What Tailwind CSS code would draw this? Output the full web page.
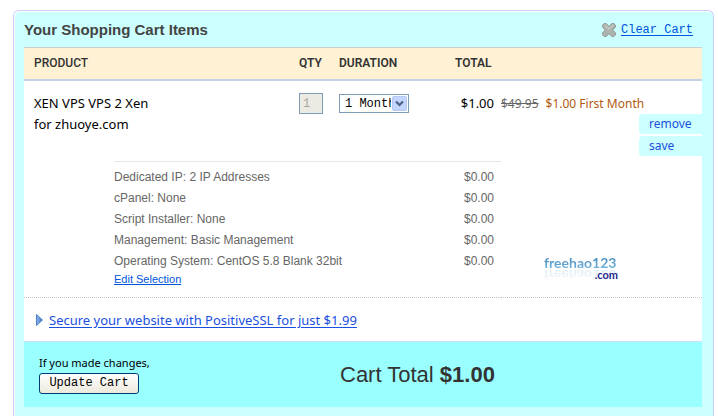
<!DOCTYPE html>
<html lang="en">
<head>
<meta charset="utf-8">
<title>Your Shopping Cart</title>
<script src="https://cdn.jsdelivr.net/npm/@tailwindcss/browser@4"></script>
</head>
<body class="min-h-screen flex flex-col bg-white pt-[10px] pl-[13px] pr-[4px] overflow-hidden font-['Noto_Sans',sans-serif] text-black">
<main class="flex-1 flex flex-col rounded-t-md border border-b-0 border-[#ccccff] bg-white pt-px pl-px">
<div class="flex-1 rounded-t-[5px] bg-[#ccffff] pl-[9px] pr-[11px]">
  <header class="flex h-[35px] items-center justify-between pr-[9px]">
    <h1 class="font-['Liberation_Sans',sans-serif] text-[15px] leading-5 font-bold text-[#444444]">Your Shopping Cart Items</h1>
    <a href="#" class="flex items-center gap-1 font-['Liberation_Mono',monospace] text-[12px] leading-5 text-[#0055dd] underline underline-offset-2">
      <svg class="size-4" viewBox="0 0 16 16" aria-hidden="true">
        <path d="M3.2 1.5h2L8 4.4l2.8-2.9h2l1.7 1.7v2L11.6 8l2.9 2.8v2l-1.7 1.7h-2L8 11.6l-2.8 2.9h-2l-1.7-1.7v-2L4.4 8 1.5 5.2v-2z" fill="#acb2ad" stroke="#929893" stroke-linejoin="round"/>
        <path d="M3.8 3 8 7l4.2-4" fill="none" stroke="#c6cac6" stroke-width="1.3"/>
      </svg>
      Clear Cart
    </a>
  </header>

  <table class="w-full table-fixed border-separate border-spacing-0 bg-white text-left">
    <colgroup>
      <col class="w-[275px]"><col class="w-[40px]"><col class="w-[116px]"><col class="w-[46px]"><col>
    </colgroup>
    <thead class="font-['Roboto',sans-serif] text-[12px] leading-[31px] text-[#333333]">
      <tr class="bg-[#fff1d4]">
        <th scope="col" class="border-t border-b-2 border-t-[#cccccc] border-b-[#c6d2ea] pl-[10px] font-medium">PRODUCT</th>
        <th scope="col" class="border-t border-b-2 border-t-[#cccccc] border-b-[#c6d2ea] font-semibold">QTY</th>
        <th scope="col" class="border-t border-b-2 border-t-[#cccccc] border-b-[#c6d2ea] font-semibold">DURATION</th>
        <th scope="col" class="border-t border-b-2 border-t-[#cccccc] border-b-[#c6d2ea] font-semibold">TOTAL</th>
        <td class="border-t border-b-2 border-t-[#cccccc] border-b-[#c6d2ea]"></td>
      </tr>
    </thead>
    <tbody class="align-top">
      <tr>
        <td class="pt-3 pl-[10px] text-[13px] leading-[21px]">XEN VPS VPS 2 Xen<br>for zhuoye.com</td>
        <td class="pt-3">
          <input type="text" value="1" disabled aria-label="Quantity" class="block h-[21px] w-6 border border-[#7f9db9] bg-[#ebebe4] px-[3px] font-['Liberation_Mono',monospace] text-[12px] text-[#aca899]">
        </td>
        <td class="pt-[13px]">
          <div class="relative w-[70px]">
            <select aria-label="Duration" class="block h-[19px] w-full appearance-none overflow-hidden border border-[#7f9db9] bg-white pl-[5px] pr-[17px] font-['Liberation_Mono',monospace] text-[12px] text-black"><option>1 Month</option></select>
            <svg class="pointer-events-none absolute top-[2px] right-[2px] h-[15px] w-[15px]" viewBox="0 0 15 15" aria-hidden="true">
              <rect x=".5" y=".5" width="14" height="14" rx="1" fill="#c3d5fd" stroke="#b4c8f6"/>
              <path d="M4 5.5 7.5 9 11 5.5" fill="none" stroke="#4d6185" stroke-width="2.2"/>
            </svg>
          </div>
        </td>
        <td class="pt-3 pr-[7px] text-right text-[13px] leading-[21px]">$1.00</td>
        <td class="pt-3 pb-[5px]">
          <p class="flex gap-[7px] whitespace-nowrap text-[12px] leading-[21px] text-[#b05a10]"><s class="text-[#666666]">$49.95</s><span>$1.00 First Month</span></p>
          <div class="ml-auto flex w-[63px] flex-col gap-[2px] text-[12px] leading-5 text-[#1a4fe0]">
            <a href="#" class="rounded-l bg-[#ccffff] pl-[10px]">remove</a>
            <a href="#" class="rounded-l bg-[#ccffff] pl-[10px]">save</a>
          </div>
        </td>
      </tr>
      <tr>
        <td colspan="4" class="border-b border-dotted border-[#c8c8c8] pb-[11px] pl-[90px] font-['Liberation_Sans',sans-serif] text-[12px] text-[#666666]">
          <ul class="border-t border-[#e6e6e6] pt-[5px] pr-[7px] leading-[21px]">
            <li class="flex justify-between"><span>Dedicated IP: 2 IP Addresses</span><span>$0.00</span></li>
            <li class="flex justify-between"><span>cPanel: None</span><span>$0.00</span></li>
            <li class="flex justify-between"><span>Script Installer: None</span><span>$0.00</span></li>
            <li class="flex justify-between"><span>Management: Basic Management</span><span>$0.00</span></li>
            <li class="flex justify-between"><span>Operating System: CentOS 5.8 Blank 32bit</span><span>$0.00</span></li>
          </ul>
          <a href="#" class="block w-fit text-[11px] leading-[14px] text-[#0055dd] underline">Edit Selection</a>
        </td>
        <td class="border-b border-dotted border-[#c8c8c8] align-bottom pb-[18px] pl-[43px]">
          <div class="w-[74px] font-['Lato',sans-serif] font-bold">
            <div class="bg-linear-to-b from-[#3f86b8] to-[#79b9de] bg-clip-text text-[14px] leading-[14px] text-transparent [-webkit-box-reflect:below_-2px_linear-gradient(transparent,rgb(0_0_0/0.25))]">freehao123</div>
            <div class="text-right text-[11px] leading-[9px] text-[#23238e]">.com</div>
          </div>
        </td>
      </tr>
    </tbody>
  </table>

  <p class="flex h-[43px] items-center gap-[6px] bg-white pl-3 text-[13px] leading-5 text-[#1a4fe0]">
    <svg class="h-3 w-[7px]" viewBox="0 0 7 12" aria-hidden="true">
      <defs><linearGradient id="arrow"><stop offset="0" stop-color="#8cb8ec"/><stop offset="1" stop-color="#3a6fba"/></linearGradient></defs>
      <path d="M.5.5v11L6.5 6z" fill="url(#arrow)" stroke="#4f82c8" stroke-linejoin="round"/>
    </svg>
    <a href="#" class="underline underline-offset-2">Secure your website with PositiveSSL for just $1.99</a>
  </p>

  <footer class="flex h-[66px] items-center border-t border-[#ccddff] bg-[#99ffff] pl-[15px]">
    <div class="w-[301px] pb-[3px]">
      <p class="text-[11px] leading-5">If you made changes,</p>
      <button type="button" class="block h-[21px] w-[100px] rounded-[3px] border border-[#003c74] bg-linear-to-b from-white to-[#ece9dc] font-['Liberation_Mono',monospace] text-[12px] leading-[18px]">Update Cart</button>
    </div>
    <p class="font-['Liberation_Sans',sans-serif] text-[22px] leading-7 text-[#333333]">Cart Total <strong>$1.00</strong></p>
  </footer>
</div>
</main>
</body>
</html>
